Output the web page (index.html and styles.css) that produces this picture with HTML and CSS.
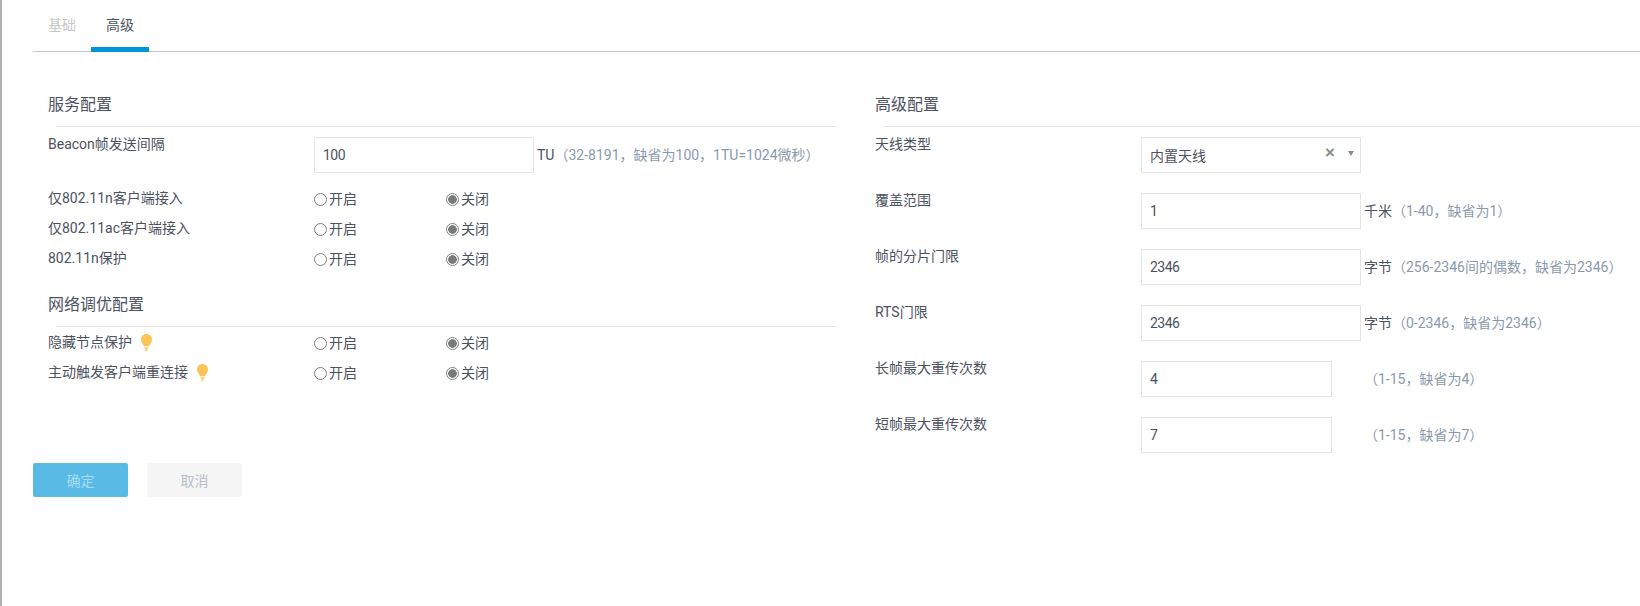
FILE: index.html
```html
<!DOCTYPE html>
<html lang="zh-CN">
<head>
<meta charset="utf-8">
<title>高级</title>
<link rel="stylesheet" href="styles.css">
</head>
<body>
<div class="page">
  <div class="tabs">
    <a class="tab">基础</a>
    <a class="tab tab-active">高级</a>
  </div>
  <div class="columns">
    <section class="col col-left">
      <h3 class="title">服务配置</h3>
      <div class="row row-input row-lead">
        <label class="label">Beacon帧发送间隔</label>
        <input class="field" type="text" value="100">
        <span class="unit">TU</span><span class="hint">（32-8191，缺省为100，1TU=1024微秒）</span>
      </div>
      <div class="row row-radio">
        <label class="label">仅802.11n客户端接入</label>
        <label class="opt"><input class="radio" type="radio" name="a">开启</label>
        <label class="opt"><input class="radio" type="radio" name="a" checked>关闭</label>
      </div>
      <div class="row row-radio">
        <label class="label">仅802.11ac客户端接入</label>
        <label class="opt"><input class="radio" type="radio" name="b">开启</label>
        <label class="opt"><input class="radio" type="radio" name="b" checked>关闭</label>
      </div>
      <div class="row row-radio">
        <label class="label">802.11n保护</label>
        <label class="opt"><input class="radio" type="radio" name="c">开启</label>
        <label class="opt"><input class="radio" type="radio" name="c" checked>关闭</label>
      </div>
      <h3 class="title title-second">网络调优配置</h3>
      <div class="row row-radio first-second">
        <label class="label">隐藏节点保护<svg class="bulb" viewBox="0 0 11 17"><path d="M5.5 0C2.4 0 0 2.4 0 5.4c0 2.6 1.7 3.900 2.600 6.100.2.500.4.800 1 .800h3.800c.6 0 .8-.3 1-.8.9-2.200 2.600-3.500 2.600-6.100C11 2.400 8.600 0 5.500 0zM3.700 13.300h3.600v1.400H3.700zM4.500 15.300h2V17h-2z"/></svg></label>
        <label class="opt"><input class="radio" type="radio" name="d">开启</label>
        <label class="opt"><input class="radio" type="radio" name="d" checked>关闭</label>
      </div>
      <div class="row row-radio">
        <label class="label">主动触发客户端重连接<svg class="bulb" viewBox="0 0 11 17"><path d="M5.5 0C2.4 0 0 2.4 0 5.4c0 2.6 1.7 3.900 2.600 6.100.2.500.4.800 1 .800h3.800c.6 0 .8-.3 1-.8.9-2.200 2.600-3.500 2.600-6.100C11 2.400 8.600 0 5.500 0zM3.700 13.300h3.600v1.400H3.700zM4.500 15.300h2V17h-2z"/></svg></label>
        <label class="opt"><input class="radio" type="radio" name="e">开启</label>
        <label class="opt"><input class="radio" type="radio" name="e" checked>关闭</label>
      </div>
    </section>
    <section class="col col-right">
      <h3 class="title">高级配置</h3>
      <div class="row row-input">
        <label class="label">天线类型</label>
        <div class="select">
          <span class="select-value">内置天线</span>
          <span class="select-clear">×</span>
          <span class="select-arrow"></span>
        </div>
      </div>
      <div class="row row-input">
        <label class="label">覆盖范围</label>
        <input class="field" type="text" value="1">
        <span class="unit">千米</span><span class="hint">（1-40，缺省为1）</span>
      </div>
      <div class="row row-input">
        <label class="label">帧的分片门限</label>
        <input class="field" type="text" value="2346">
        <span class="unit">字节</span><span class="hint">（256-2346间的偶数，缺省为2346）</span>
      </div>
      <div class="row row-input">
        <label class="label">RTS门限</label>
        <input class="field" type="text" value="2346">
        <span class="unit">字节</span><span class="hint">（0-2346，缺省为2346）</span>
      </div>
      <div class="row row-input">
        <label class="label">长帧最大重传次数</label>
        <input class="field field-short" type="text" value="4">
        <span class="hint hint-short">（1-15，缺省为4）</span>
      </div>
      <div class="row row-input">
        <label class="label">短帧最大重传次数</label>
        <input class="field field-short" type="text" value="7">
        <span class="hint hint-short">（1-15，缺省为7）</span>
      </div>
    </section>
  </div>
  <div class="actions">
    <button class="btn btn-primary" type="button">确定</button>
    <button class="btn btn-cancel" type="button">取消</button>
  </div>
</div>
</body>
</html>
```
FILE: styles.css
```css
* { box-sizing: border-box; }
html, body { margin: 0; height: 100%; }
body {
  background: #fff;
  color: #4d5260;
  font-family: Roboto, "Noto Sans CJK SC", sans-serif;
  font-size: 14px;
  overflow: hidden;
}
.page {
  height: 606px;
  border-left: 2px solid #b2b2b2;
  padding-left: 31px;
}
.tabs {
  display: flex;
  height: 52px;
  border-bottom: 1px solid #c8c8c8;
}
.tab {
  width: 58px;
  height: 52px;
  line-height: 50px;
  text-align: center;
  color: #c8c8c8;
}
.tab-active {
  color: #4d5260;
  border-bottom: 5px solid #0095d9;
}
.columns {
  display: flex;
  height: 411px;
}
.col-left { width: 805px; padding: 0 1px 0 15px; }
.col-right { flex: 1; padding-left: 37px; }
.title {
  margin: 41px 0 0;
  height: 34px;
  font-size: 16px;
  font-weight: 400;
  line-height: 24px;
  color: #4d5260;
}
.title::after {
  content: "";
  display: block;
  height: 1px;
  background: #e6e6e6;
  margin: 9px 0 0 8px;
}
.title-second { margin-top: 19px; }
.row { display: flex; align-items: flex-start; }
.row-input { height: 56px; padding-top: 10px; }
.row-lead { height: 57px; }
.label {
  width: 266px;
  flex: none;
  line-height: 20px;
  margin-top: -3px;
  display: flex;
  align-items: center;
}
.field {
  width: 220px;
  height: 36px;
  flex: none;
  border: 1px solid #e5e5e5;
  padding: 0 8px;
  font: inherit;
  letter-spacing: -.5px;
  color: #4d5260;
  outline: none;
}
.field-short { width: 191px; }
.unit { margin-left: 3px; line-height: 36px; }
.hint { color: #8b99ad; line-height: 36px; }
.hint-short { margin-left: 32px; }
.row-radio { height: 30px; align-items: center; }
.row-radio .label { margin-top: -2px; }
.first-second { margin-top: 1px; }
.opt {
  width: 132px;
  flex: none;
  display: flex;
  align-items: center;
  line-height: 20px;
}
.radio {
  appearance: none;
  width: 13px;
  height: 13px;
  margin: 0 2px 0 0;
  border: 1px solid #808080;
  border-radius: 50%;
  background: #fff;
  flex: none;
}
.radio:checked {
  background: radial-gradient(circle, #7a7a7a 0 4px, #fff 4.600px);
}
.bulb {
  width: 11px;
  height: 17px;
  margin-left: 9px;
  fill: #fcc456;
  flex: none;
}
.select {
  width: 220px;
  height: 36px;
  border: 1px solid #e5e5e5;
  padding-left: 8px;
  display: flex;
  align-items: center;
}
.select-value { flex: 1; }
.select-clear {
  color: #8a8a8a;
  font-family: "Liberation Sans", sans-serif;
  font-size: 17px;
  font-weight: 700;
  line-height: 20px;
  margin-top: -4px;
  margin-right: 13px;
}
.select-arrow {
  width: 0;
  height: 0;
  border-left: 3.500px solid transparent;
  border-right: 3.500px solid transparent;
  border-top: 5px solid #8a8a8a;
  margin: -4px 6px 0 0;
}
.actions { display: flex; gap: 19px; }
.btn {
  width: 95px;
  height: 34px;
  border: 0;
  border-radius: 2px;
  font: inherit;
  padding: 0;
}
.btn-primary { background: #59bae5; color: #a9dcf2; }
.btn-cancel { background: #f5f5f5; color: #b5bfc9; }
```
